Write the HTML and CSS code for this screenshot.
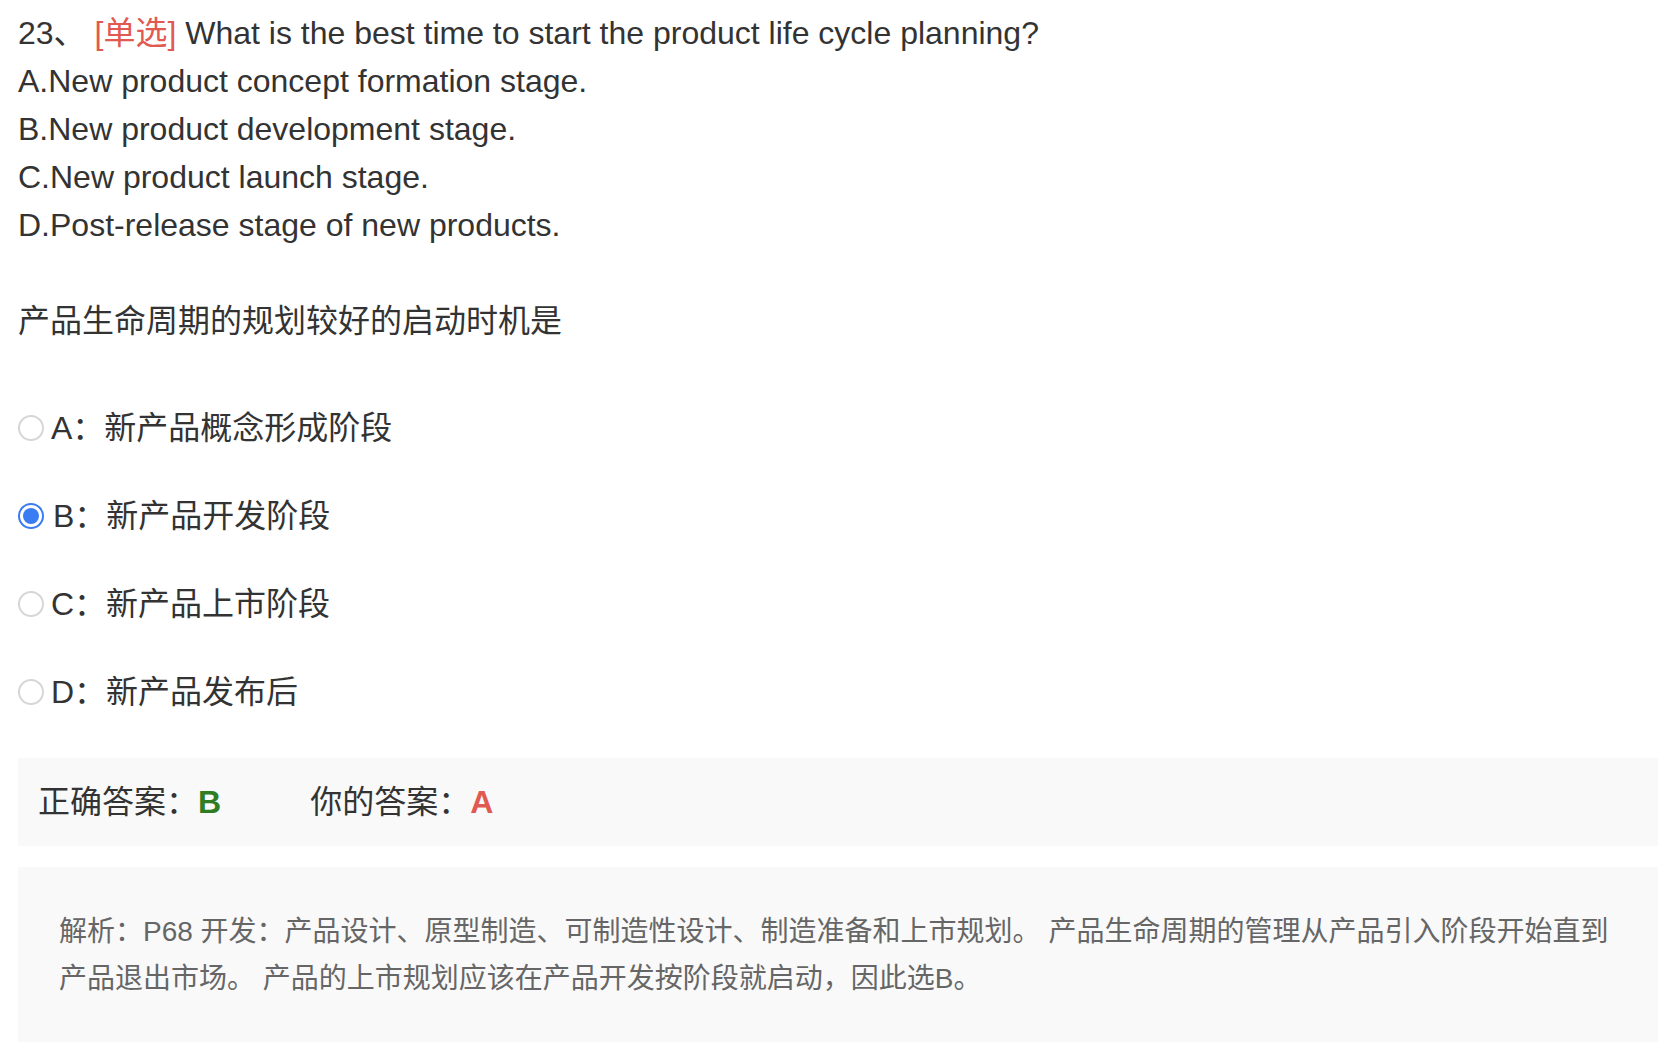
FILE: index.html
```html
<!DOCTYPE html>
<html lang="zh-CN">
<head>
<meta charset="utf-8">
<title>题目 23</title>
<link rel="stylesheet" href="styles.css">
</head>
<body>
<div class="page">
  <div class="question-en">
    <p class="line">23、 <span class="tag">[单选]</span> What is the best time to start the product life cycle planning?</p>
    <p class="line">A.New product concept formation stage.</p>
    <p class="line">B.New product development stage.</p>
    <p class="line">C.New product launch stage.</p>
    <p class="line">D.Post-release stage of new products.</p>
    <p class="line blank">&nbsp;</p>
    <p class="line">产品生命周期的规划较好的启动时机是</p>
  </div>

  <ul class="options">
    <li class="option"><span class="radio"></span><span class="opt-text">A：新产品概念形成阶段</span></li>
    <li class="option"><span class="radio checked"></span><span class="opt-text">B：新产品开发阶段</span></li>
    <li class="option"><span class="radio"></span><span class="opt-text">C：新产品上市阶段</span></li>
    <li class="option"><span class="radio"></span><span class="opt-text">D：新产品发布后</span></li>
  </ul>

  <div class="answer-box">
    <span class="ans-item">正确答案：<b class="correct">B</b></span>
    <span class="ans-item yours">你的答案：<b class="wrong">A</b></span>
  </div>

  <div class="analysis">
    解析：P68 开发：产品设计、原型制造、可制造性设计、制造准备和上市规划。 产品生命周期的管理从产品引入阶段开始直到产品退出市场。 产品的上市规划应该在产品开发按阶段就启动，因此选B。
  </div>
</div>
</body>
</html>
```

FILE: styles.css
```css
html, body {
  margin: 0;
  padding: 0;
  background: #ffffff;
}

body {
  font-family: "Liberation Sans", "Noto Sans CJK SC", Arial, sans-serif;
  color: #333333;
}

.page {
  padding: 9px 16px 0 18px;
}

.question-en {
  font-size: 32px;
  line-height: 48px;
}

.line {
  margin: 0;
}

.tag {
  color: #e05a52;
}

.options {
  list-style: none;
  margin: 59px 0 0 0;
  padding: 0;
  display: flex;
  flex-direction: column;
  gap: 40px;
}

.option {
  display: flex;
  align-items: center;
  height: 48px;
  font-size: 32px;
  line-height: 48px;
}

.radio {
  box-sizing: border-box;
  width: 26px;
  height: 26px;
  border-radius: 50%;
  border: 2px solid #d6d6d6;
  background: #ffffff;
  margin-right: 7px;
  flex: none;
  position: relative;
}

.radio.checked {
  border: 2px solid #3a7cf2;
  margin-right: 9px;
}

.radio.checked::after {
  content: "";
  position: absolute;
  left: 3px;
  top: 3px;
  width: 16px;
  height: 16px;
  border-radius: 50%;
  background: #3a7cf2;
}

.answer-box {
  margin-top: 42px;
  background: #f9f9f9;
  height: 88px;
  box-sizing: border-box;
  padding: 0 20px;
  display: flex;
  align-items: center;
  font-size: 32px;
  line-height: 48px;
}

.ans-item b {
  font-weight: bold;
}

.correct {
  color: #2f7d22;
}

.wrong {
  color: #e05a52;
}

.yours {
  margin-left: 89px;
}

.analysis {
  margin-top: 21px;
  background: #f9f9f9;
  padding: 41px 40px 40px 41px;
  font-size: 28px;
  line-height: 47px;
  color: #666666;
}
```
